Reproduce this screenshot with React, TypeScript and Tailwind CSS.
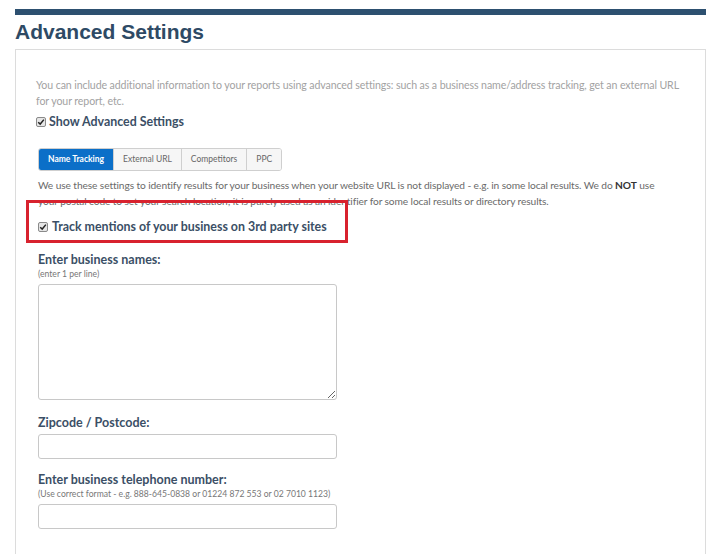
import { useState } from 'react'

const tabs = ['Name Tracking', 'External URL', 'Competitors', 'PPC']

function Check() {
  return (
    <span className="inline-flex h-[10px] w-[10px] shrink-0 items-center justify-center rounded-[2px] border border-[#8a8a8a] bg-[#e6e6e6]">
      <svg viewBox="0 0 10 10" className="h-[8px] w-[8px]">
        <path d="M1.5 5.2 L4 7.6 L8.6 2" fill="none" stroke="#222" strokeWidth="1.8" />
      </svg>
    </span>
  )
}

export default function App() {
  const [active, setActive] = useState(0)

  return (
    <div className="min-h-[554px] bg-white px-[15px] pt-[9px] font-['Lato','Open_Sans',sans-serif] text-[#3b4f66]">
      <div className="h-[6px] w-[691px] bg-[#2d5070]" />
      <h1 className="mt-[4px] font-['Liberation_Sans',Arial,sans-serif] text-[21px] leading-[26px] font-bold text-[#2e4a65]">
        Advanced Settings
      </h1>

      <div className="relative mt-[4px] h-[510px] w-[691px] border-t border-r border-l border-[#dcdcdc] px-[20px] pt-[27px]">
        <p className="w-[645px] text-[10.6px] leading-[16px] tracking-[-0.1px] text-[#a2a2a2]">
          You can include additional information to your reports using advanced settings: such as a business name/address tracking, get an external URL for your report, etc.
        </p>
        <label className="mt-[4px] flex items-center gap-[3px] text-[12.4px] leading-[18px] font-bold">
          <Check />
          Show Advanced Settings
        </label>

        <div className="mt-[17px] ml-[2px] flex h-[23px] w-fit overflow-hidden rounded-[3px] border border-[#cfcfcf] text-[8.5px]">
          {tabs.map((t, i) => (
            <button
              key={t}
              onClick={() => setActive(i)}
              className={
                i === active
                  ? 'bg-[#0b6fc8] px-[9px] font-bold text-white'
                  : 'border-l border-[#cfcfcf] bg-[#f6f6f6] px-[9px] text-[#666]'
              }
            >
              {t}
            </button>
          ))}
        </div>

        <p className="mt-[6px] ml-[2px] w-[635px] text-[10.2px] leading-[16px] tracking-[-0.1px] text-[#6a6a6a]">
          We use these settings to identify results for your business when your website URL is not displayed - e.g. in some local results. We do <b className="text-[#333]">NOT</b> use your postal code to set your search location; it is purely used as an identifier for some local results or directory results.
        </p>

        <label className="mt-[9px] ml-[2px] flex items-center gap-[4px] text-[12.4px] leading-[18px] font-bold">
          <Check />
          Track mentions of your business on 3rd party sites
        </label>

        <div className="absolute top-[150px] left-[10px] h-[43px] w-[322px] border-[3px] border-[#d8222e]" />

        <div className="mt-[16px] ml-[2px]">
          <div className="text-[12.5px] leading-[16px] font-bold">Enter business names:</div>
          <div className="text-[8.6px] leading-[12px] text-[#777]">(enter 1 per line)</div>
          <textarea className="mt-[4px] block h-[116px] w-[299px] resize-y rounded-[3px] border border-[#c8c8c8]" />

          <div className="mt-[15px] text-[12.5px] leading-[16px] font-bold">Zipcode / Postcode:</div>
          <input className="mt-[3px] block h-[25px] w-[299px] rounded-[3px] border border-[#c8c8c8]" />

          <div className="mt-[13px] text-[12.5px] leading-[16px] font-bold">Enter business telephone number:</div>
          <div className="text-[8.6px] leading-[12px] text-[#777]">
            (Use correct format - e.g. 888-645-0838 or 01224 872 553 or 02 7010 1123)
          </div>
          <input className="mt-[4px] block h-[25px] w-[299px] rounded-[3px] border border-[#c8c8c8]" />
        </div>
      </div>
    </div>
  )
}
